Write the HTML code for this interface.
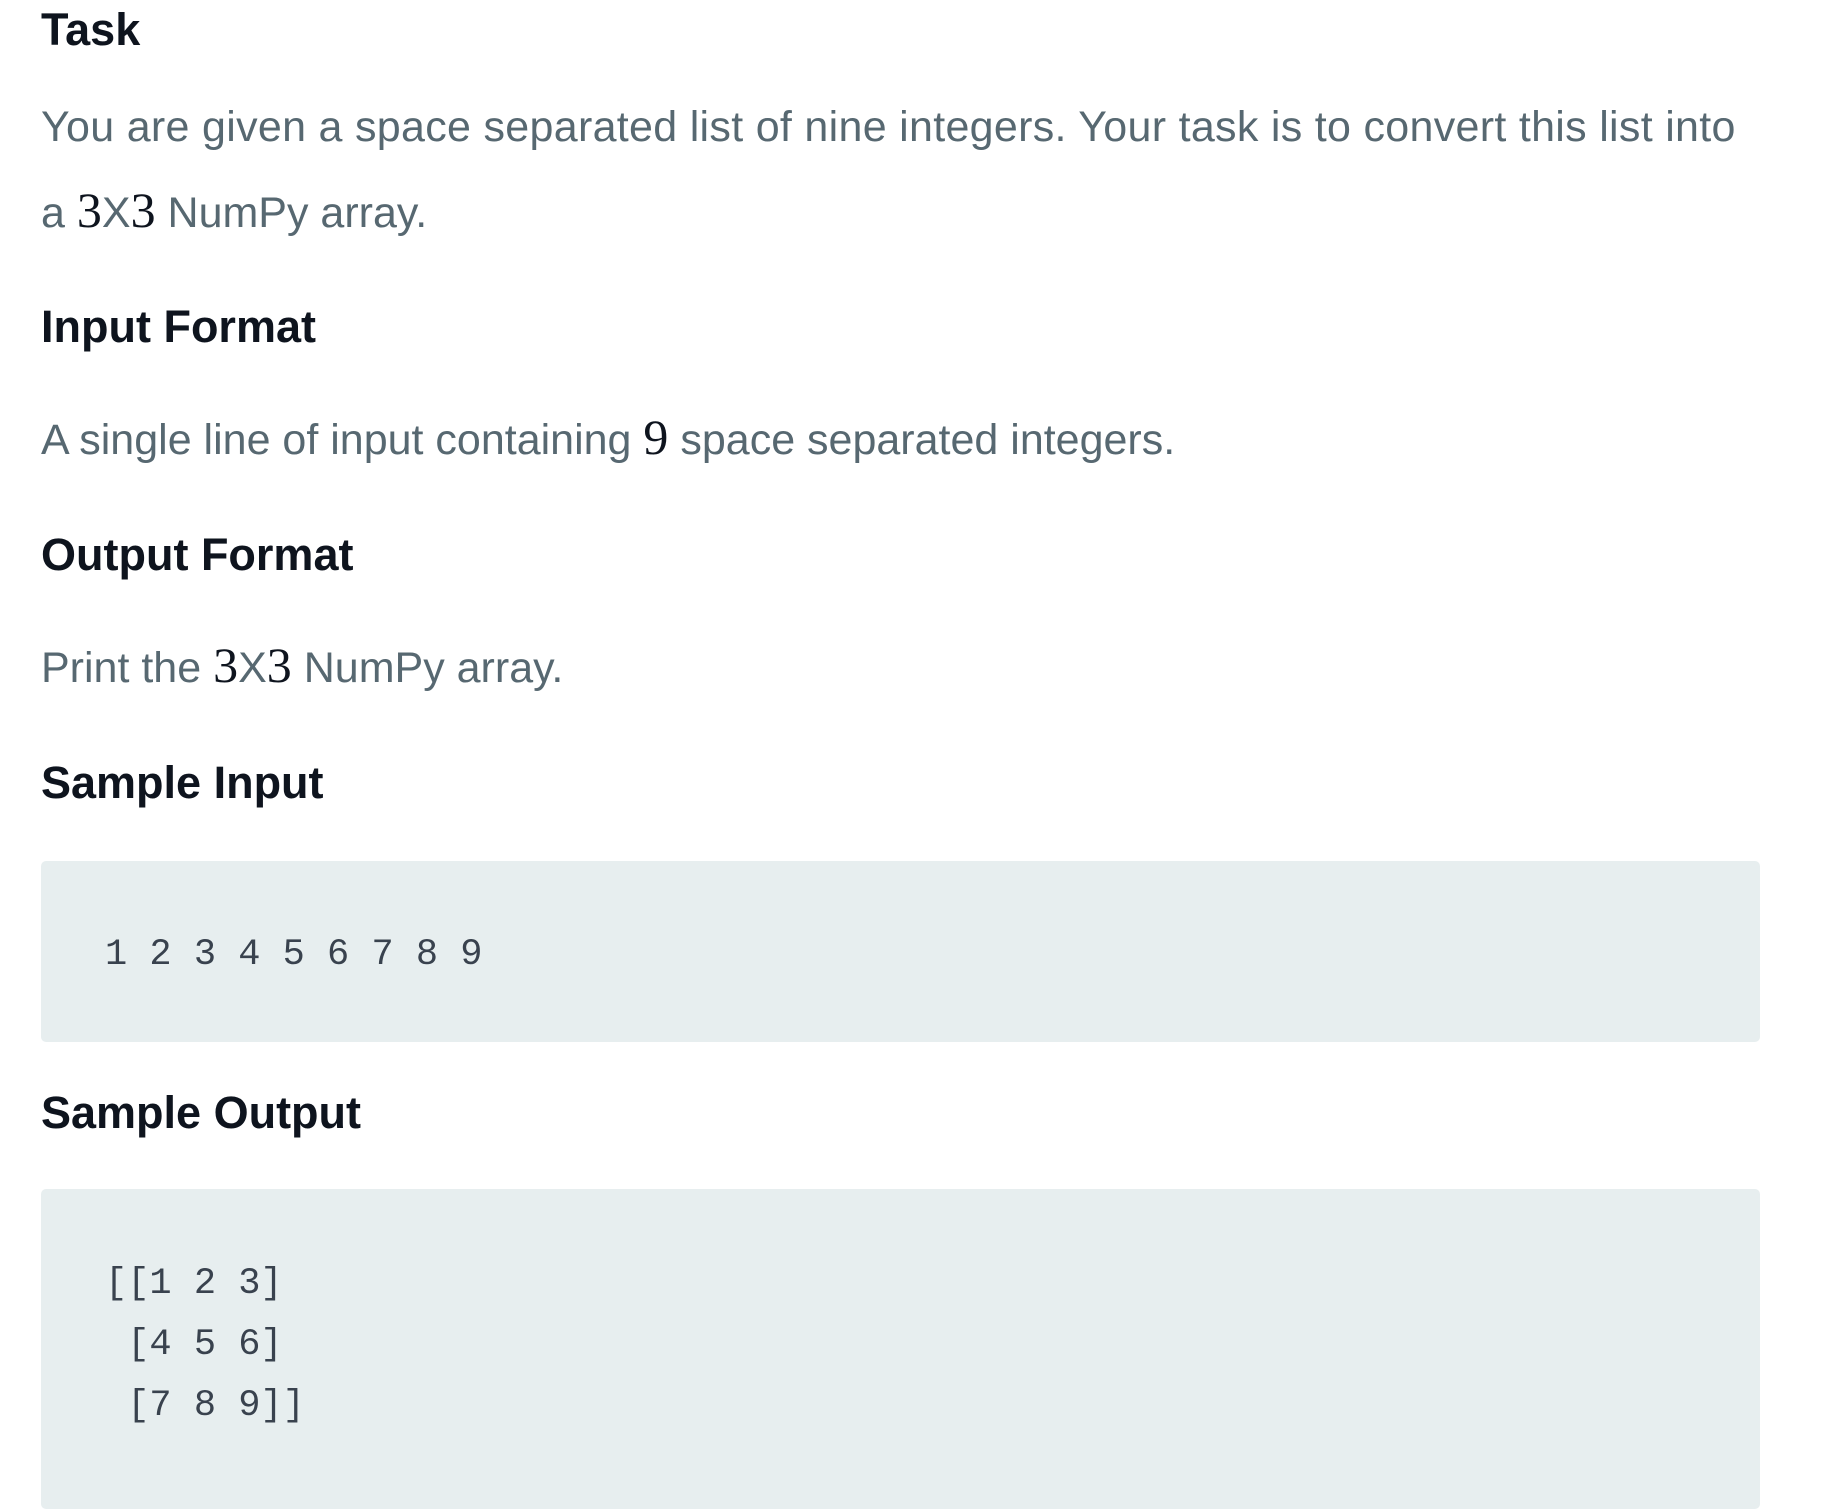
<!DOCTYPE html>
<html><head><meta charset="utf-8"><style>
html,body{margin:0;padding:0;background:#fff;width:1824px;height:1479px;overflow:hidden}
.a{position:absolute;left:41px;white-space:nowrap}
h{font-family:"Liberation Sans",sans-serif;font-weight:bold;font-size:45px;color:#0e141e}
.t{font-family:"Liberation Sans",sans-serif;font-size:43px;color:#576871}
.m{font-family:"Liberation Serif",serif;font-size:50px;color:#0e141e}
.box{position:absolute;left:41px;width:1719px;background:#e7eeef;border-radius:5px}
.c{position:absolute;left:105px;font-family:"Liberation Mono",monospace;font-size:37px;color:#39424e;white-space:pre}
</style></head><body>
<div class="a" style="top:4px"><h>Task</h></div>
<div class="a t" style="top:103px;letter-spacing:0.3px">You are given a space separated list of nine integers. Your task is to convert this list into</div>
<div class="a t" style="top:181px">a <span class="m">3</span>X<span class="m">3</span> NumPy array.</div>
<div class="a" style="top:301px"><h>Input Format</h></div>
<div class="a t" style="top:408px">A single line of input containing <span class="m">9</span> space separated integers.</div>
<div class="a" style="top:529px"><h>Output Format</h></div>
<div class="a t" style="top:636px">Print the <span class="m">3</span>X<span class="m">3</span> NumPy array.</div>
<div class="a" style="top:757px"><h>Sample Input</h></div>
<div class="box" style="top:861px;height:181px"></div>
<div class="c" style="top:934px">1 2 3 4 5 6 7 8 9</div>
<div class="a" style="top:1087px"><h>Sample Output</h></div>
<div class="box" style="top:1189px;height:320px"></div>
<div class="c" style="top:1254px;line-height:61px">[[1 2 3]
 [4 5 6]
 [7 8 9]]</div>
</body></html>
